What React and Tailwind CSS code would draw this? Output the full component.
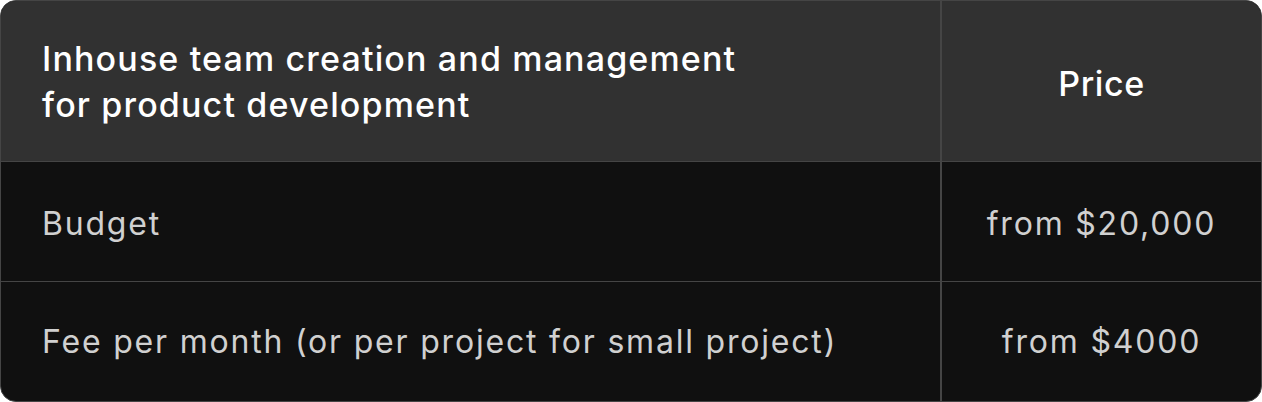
export default function App() {
  const rows = [
    ["Budget", "from $20,000", "pt-[4px]"],
    ["Fee per month (or per project for small project)", "from $4000", "pt-[1px]"],
  ];
  return (
    <div className="w-[1262px] h-[402px] bg-white" style={{ fontFamily: "Inter, 'Noto Sans', sans-serif" }}>
      <div className="w-full h-full rounded-[16px] border border-[#454545] overflow-hidden grid grid-cols-[941px_1fr] grid-rows-[161px_120px_1fr] bg-[#101010]">
        <div className="bg-[#313131] border-r-2 border-b border-[#454545] flex items-center pl-[41px] pt-[1px]">
          <div className="text-white text-[34px] font-medium leading-[46px] tracking-[1.15px]">
            Inhouse team creation and management
            <br />
            for product development
          </div>
        </div>
        <div className="bg-[#313131] border-b border-[#454545] flex items-center justify-center pt-[5px]">
          <div className="text-white text-[34px] font-medium tracking-[0.6px]">Price</div>
        </div>
        {rows.map(([a, b, pt], i) => (
          <>
            <div key={"a" + i} className={"border-r-2 border-[#454545] flex items-center pl-[41px] text-[#d0d0d0] text-[32px] tracking-[1.8px] " + pt + (i === 0 ? " border-b" : "")}>
              {a}
            </div>
            <div key={"b" + i} className={"border-[#454545] flex items-center justify-center text-[#d0d0d0] text-[32px] tracking-[1.8px] " + pt + (i === 0 ? " border-b" : "")}>
              {b}
            </div>
          </>
        ))}
      </div>
    </div>
  );
}
